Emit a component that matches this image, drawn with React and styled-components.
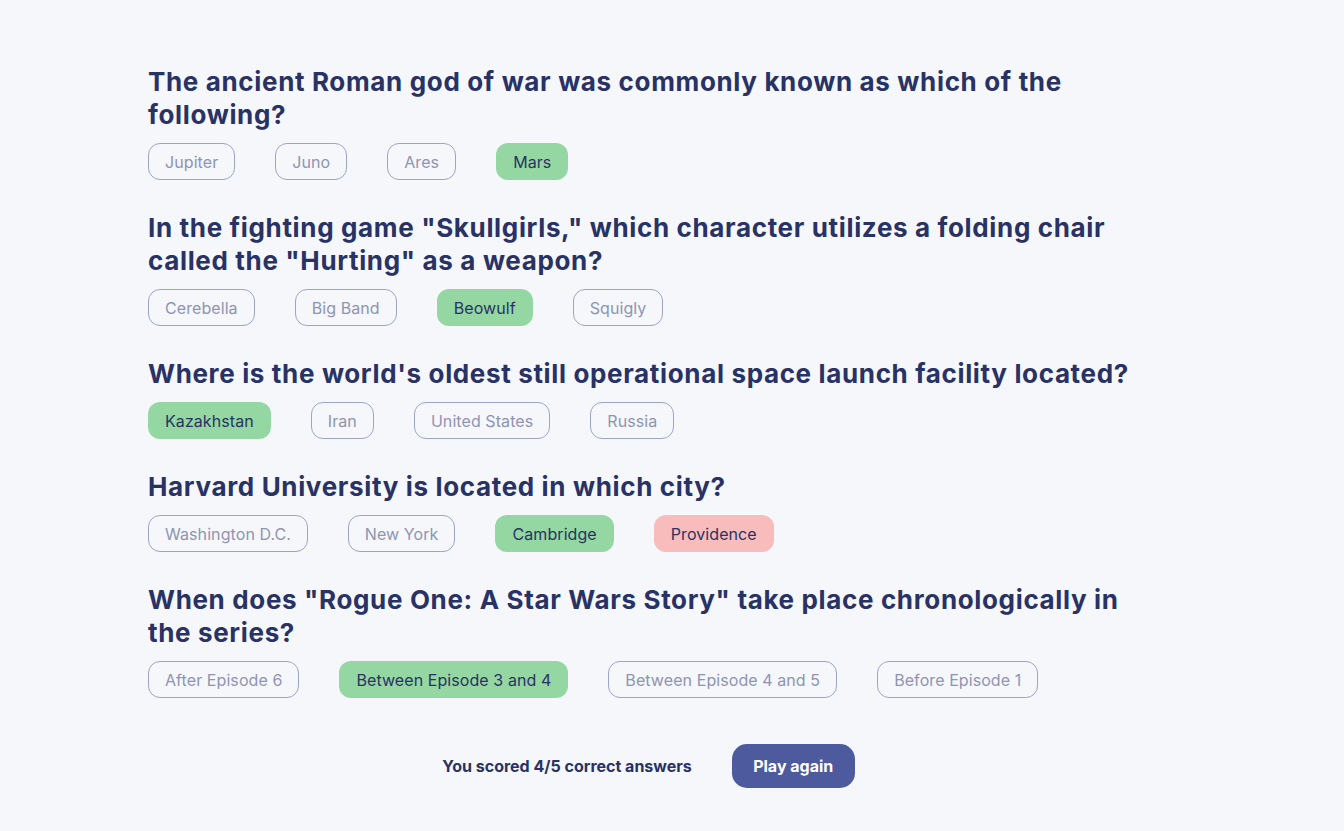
import React from 'react'
import styled, { createGlobalStyle } from 'styled-components'

const GlobalStyle = createGlobalStyle`
  body {
    margin: 0;
    background: #f5f7fb;
    font-family: Inter, "Liberation Sans", sans-serif;
  }
`

const Page = styled.main`
  width: 1048px;
  margin: 0 auto;
  padding-top: 65px;
`

const Question = styled.section`
  margin-bottom: 31px;
`

const Title = styled.h2`
  max-width: 1000px;
  margin: 0 0 12px;
  font-family: Inter, "Liberation Sans", sans-serif;
  font-size: 26px;
  font-weight: 700;
  line-height: 33px;
  letter-spacing: 0.65px;
  color: #293264;
`

const Answers = styled.div`
  display: flex;
  gap: 40px;
`

const Answer = styled.span`
  box-sizing: border-box;
  height: 37px;
  display: flex;
  align-items: center;
  padding: 0 16px;
  border-radius: 12px;
  font-size: 16px;
  letter-spacing: 0.08px;
  border: 1px solid ${p => (p.state ? 'transparent' : '#9ea4c6')};
  color: ${p => (p.state ? '#293264' : '#8f94b2')};
  background: ${p =>
    p.state === 'right' ? '#94d7a2' : p.state === 'wrong' ? '#f8bcbc' : 'transparent'};
`

const Footer = styled.div`
  display: flex;
  align-items: center;
  justify-content: center;
  gap: 40px;
  margin-top: 46px;
  margin-right: 47px;
`

const Score = styled.p`
  margin: 0;
  font-size: 16px;
  font-weight: 700;
  color: #293264;
`

const PlayButton = styled.button`
  height: 44px;
  width: 123px;
  border: none;
  border-radius: 15px;
  background: #4d5b9e;
  color: #fff;
  font-family: Inter, "Liberation Sans", sans-serif;
  font-size: 16px;
  font-weight: 700;
`

const questions = [
  {
    q: 'The ancient Roman god of war was commonly known as which of the following?',
    a: ['Jupiter', 'Juno', 'Ares', 'Mars'],
    right: 3,
  },
  {
    q: 'In the fighting game "Skullgirls," which character utilizes a folding chair called the "Hurting" as a weapon?',
    a: ['Cerebella', 'Big Band', 'Beowulf', 'Squigly'],
    right: 2,
  },
  {
    q: "Where is the world's oldest still operational space launch facility located?",
    a: ['Kazakhstan', 'Iran', 'United States', 'Russia'],
    right: 0,
  },
  {
    q: 'Harvard University is located in which city?',
    a: ['Washington D.C.', 'New York', 'Cambridge', 'Providence'],
    right: 2,
    wrong: 3,
  },
  {
    q: 'When does "Rogue One: A Star Wars Story" take place chronologically in the series?',
    a: ['After Episode 6', 'Between Episode 3 and 4', 'Between Episode 4 and 5', 'Before Episode 1'],
    right: 1,
  },
]

export default function App() {
  return (
    <>
      <GlobalStyle />
      <Page>
        {questions.map(item => (
          <Question key={item.q}>
            <Title>{item.q}</Title>
            <Answers>
              {item.a.map((ans, i) => (
                <Answer
                  key={ans}
                  state={i === item.right ? 'right' : i === item.wrong ? 'wrong' : undefined}
                >
                  {ans}
                </Answer>
              ))}
            </Answers>
          </Question>
        ))}
        <Footer>
          <Score>You scored 4/5 correct answers</Score>
          <PlayButton>Play again</PlayButton>
        </Footer>
      </Page>
    </>
  )
}
